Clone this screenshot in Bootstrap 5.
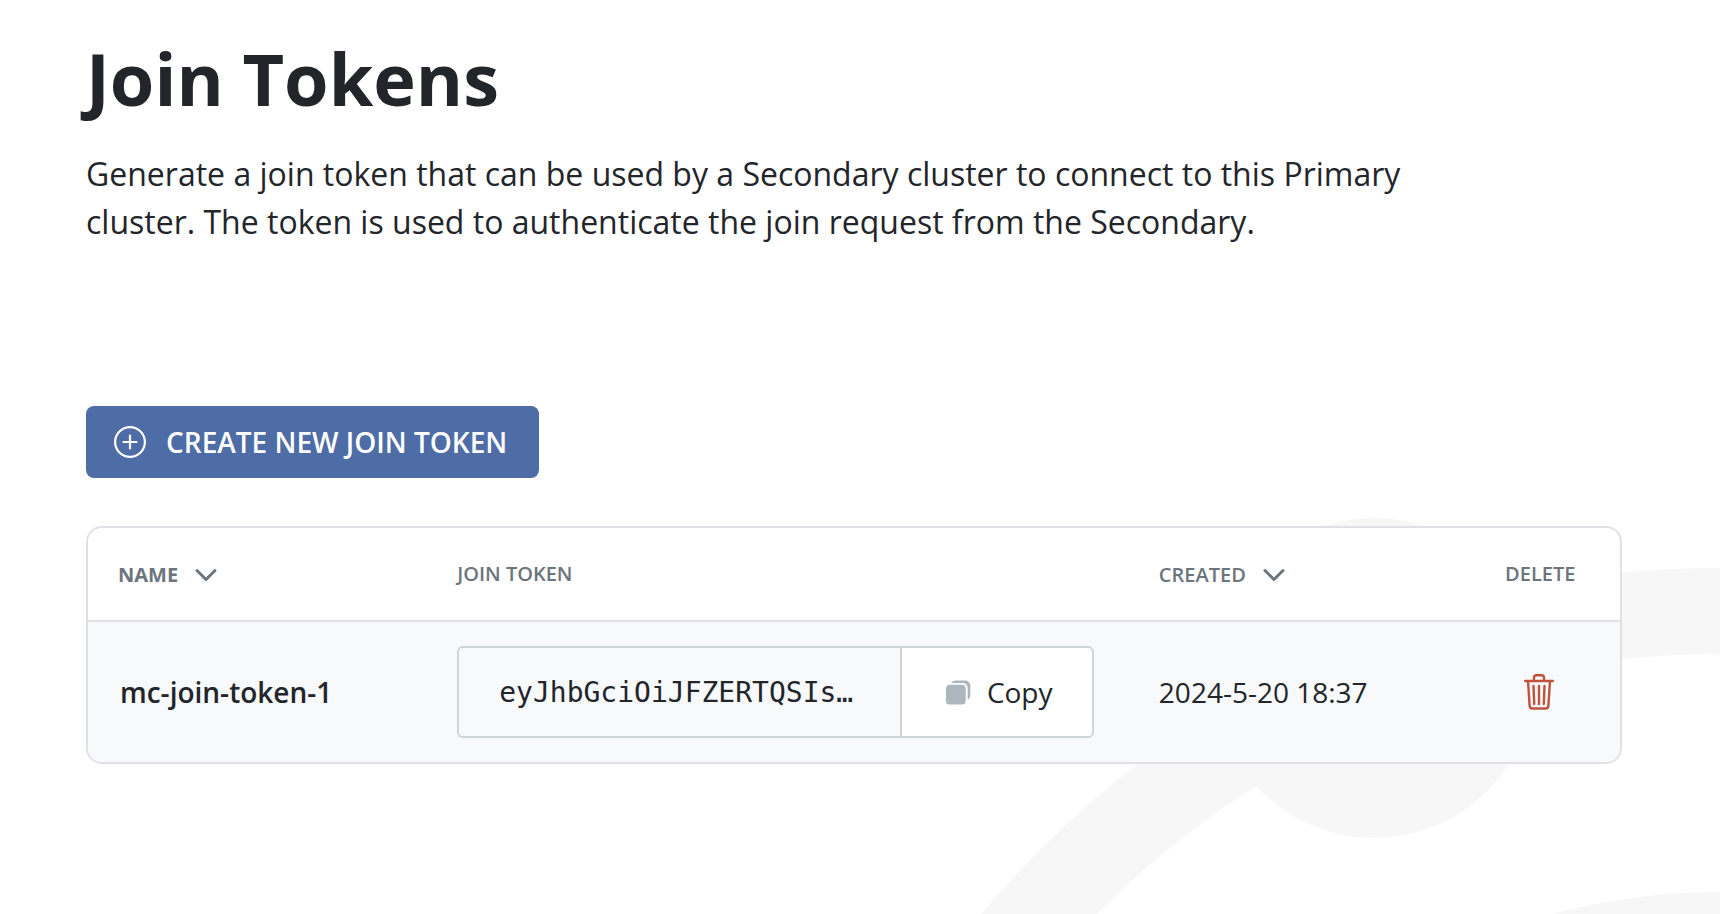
<!DOCTYPE html>
<html lang="en">
<head>
<meta charset="utf-8">
<meta name="viewport" content="width=device-width, initial-scale=1">
<title>Join Tokens</title>
<link href="https://cdn.jsdelivr.net/npm/bootstrap@5.3.0/dist/css/bootstrap.min.css" rel="stylesheet">
<style>
  body { font-family: "Open Sans", "Noto Sans", sans-serif; font-size: 28px; line-height: 40px; color: #22252a; background: #fff; }
  .page { padding: 34px 98px 48px 86px; }
  .backdrop { right: 0; bottom: 0; width: 740px; height: 400px; z-index: 0; }
  .page-title { font-size: 72px; line-height: 88px; margin-bottom: 28px; }
  .intro { font-size: 32px; line-height: 48px; max-width: 1340px; margin-bottom: 160px; }
  .btn-create { background: #4e6ca5; color: #fff; font-size: 28px; line-height: 40px; font-weight: 600; padding: 16px 32px 16px 28px; border: 0; border-radius: 8px; gap: 20px; }
  .btn-create:hover { background: #425d91; color: #fff; }
  .token-card { border: 2px solid #dee2e6; border-radius: 16px; background: #fff; margin-top: 48px; }
  .token-table { table-layout: fixed; }
  .token-table th, .token-table td { padding: 0; vertical-align: middle; text-align: left; }
  .token-table th:first-child { padding-left: 30px; }
  .token-table td:first-child { padding-left: 32px; }
  .token-table thead th { height: 93px; font-size: 20px; line-height: 28px; font-weight: 600; color: #6c757d; border-bottom: 2px solid #dee2e6; }
  .token-table tbody tr { background: #f8f9fb; height: 141px; }
  .col-name { width: 24.1%; } .col-token { width: 45.8%; } .col-created { width: 22.6%; } .col-delete { width: 7.5%; }
  .btn-sort { font-size: 20px; line-height: 28px; font-weight: 600; color: #6c757d; padding: 0; border: 0; gap: 16px; }
  .btn-sort.active-sort { font-weight: 700; }
  .token-group { width: 637px; }
  .token-group .form-control { font-family: "DejaVu Sans Mono", monospace; font-size: 28px; line-height: 40px; padding: 24px 40px; height: 92px; color: #22252a; background: #f8f9fb; border: 2px solid #ced4da; border-right: 0; border-radius: 6px; }
  .token-group .btn-copy { background: #fff; font-size: 28px; line-height: 40px; color: #22252a; border: 2px solid #ced4da; border-radius: 6px; width: 194px; gap: 16px; padding: 0 0 0 4px; margin-left: 0; }
  .btn-trash { padding: 0; border: 0; margin-left: 19px; }
</style>
</head>
<body>
<div class="position-relative overflow-hidden min-vh-100">
  <svg class="backdrop position-absolute" viewBox="980 514 740 400" aria-hidden="true">
    <circle cx="1718" cy="1525" r="914" fill="none" stroke="#f7f7f7" stroke-width="86"/>
    <circle cx="1374" cy="678" r="160" fill="#f7f7f7"/>
    <circle cx="1718" cy="1525" r="633" fill="#f7f7f7"/>
  </svg>

  <main class="page position-relative">
    <h1 class="page-title fw-bold">Join Tokens</h1>
    <p class="intro">Generate a join token that can be used by a Secondary cluster to connect to this Primary cluster. The token is used to authenticate the join request from the Secondary.</p>

    <button type="button" class="btn btn-create d-inline-flex align-items-center">
      <svg width="32" height="32" viewBox="0 0 32 32" fill="none" stroke="currentColor" stroke-width="2.2" stroke-linecap="round" aria-hidden="true">
        <circle cx="16" cy="16" r="14.9"/><path d="M16 9.5v13M9.500 16h13"/>
      </svg>
      CREATE NEW JOIN TOKEN
    </button>

    <div class="token-card overflow-hidden">
      <table class="token-table w-100">
        <colgroup><col class="col-name"><col class="col-token"><col class="col-created"><col class="col-delete"></colgroup>
        <thead>
          <tr>
            <th scope="col"><button type="button" class="btn btn-sort active-sort d-inline-flex align-items-center">NAME
              <svg width="24" height="16" viewBox="0 0 24 16" fill="none" stroke="currentColor" stroke-width="3" stroke-linecap="round" stroke-linejoin="round" aria-hidden="true"><path d="M3 3.500l9 9 9-9"/></svg></button></th>
            <th scope="col">JOIN TOKEN</th>
            <th scope="col"><button type="button" class="btn btn-sort d-inline-flex align-items-center">CREATED
              <svg width="24" height="16" viewBox="0 0 24 16" fill="none" stroke="currentColor" stroke-width="3" stroke-linecap="round" stroke-linejoin="round" aria-hidden="true"><path d="M3 3.500l9 9 9-9"/></svg></button></th>
            <th scope="col">DELETE</th>
          </tr>
        </thead>
        <tbody>
          <tr>
            <td class="fw-semibold">mc-join-token-1</td>
            <td>
              <div class="input-group flex-nowrap token-group">
                <input type="text" class="form-control" value="eyJhbGciOiJFZERTQSIs…" aria-label="Join token" readonly>
                <button type="button" class="btn btn-copy d-inline-flex align-items-center justify-content-center">
                  <svg width="25" height="25" viewBox="0 0 26 26" fill="#adb5bd" aria-hidden="true">
                    <rect x="0" y="5" width="20.500" height="20.500" rx="4"/>
                    <path d="M5.500 3.200C6.300 1.400 7.800.5 9.700.5H20a5.300 5.300 0 0 1 5.300 5.300V16c0 2-.9 3.500-2.800 4.300V8.200a5 5 0 0 0-5-5z"/>
                  </svg>
                  Copy
                </button>
              </div>
            </td>
            <td>2024-5-20 18:37</td>
            <td>
              <button type="button" class="btn btn-trash d-flex" aria-label="Delete mc-join-token-1">
                <svg width="30" height="36" viewBox="0 0 30 36" fill="none" stroke="#bf523c" stroke-width="2.400" stroke-linecap="round" stroke-linejoin="round" aria-hidden="true">
                  <path d="M1.200 7h27.600M10 7V3.700Q10 1.200 12.500 1.200h5Q20 1.200 20 3.700V7M4 7l1.600 24.700Q5.800 34.500 8.500 34.500h13q2.700 0 2.900-2.800L26 7M9.500 12l.7 18M15 12v18M20.500 12l-.7 18"/>
                </svg>
              </button>
            </td>
          </tr>
        </tbody>
      </table>
    </div>
  </main>
</div>
<script src="https://cdn.jsdelivr.net/npm/bootstrap@5.3.0/dist/js/bootstrap.bundle.min.js"></script>
</body>
</html>
